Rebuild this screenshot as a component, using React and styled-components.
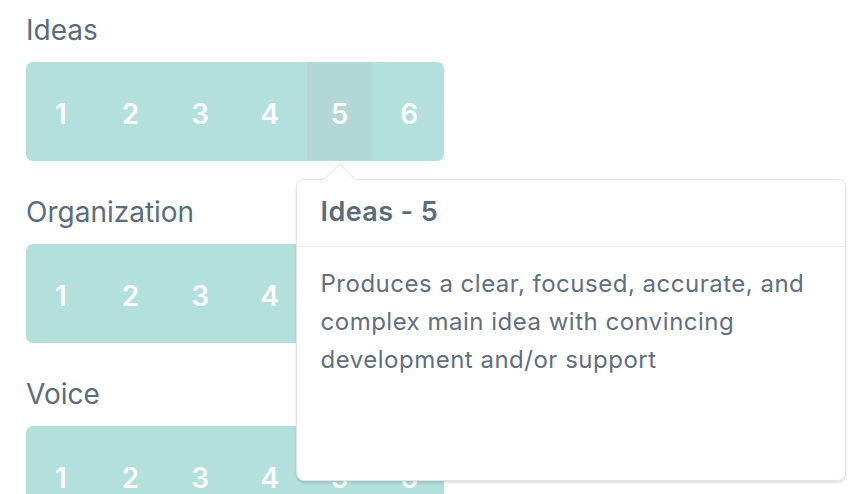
import React from "react";
import styled, { createGlobalStyle } from "styled-components";

const GlobalStyle = createGlobalStyle`
  html, body { margin: 0; padding: 0; background: #ffffff; }
  body { font-family: Inter, "Noto Sans", "Liberation Sans", sans-serif; }
`;

const Page = styled.div`
  display: flex;
  flex-direction: column;
  gap: 34px;
  padding: 13px 26px 0;
  width: 858px;
  height: 494px;
  box-sizing: border-box;
  overflow: hidden;
  position: relative;
`;

const Section = styled.section`
  display: flex;
  flex-direction: column;
  gap: 15px;
`;

const Label = styled.div`
  font-size: 28px;
  line-height: 34px;
  color: #5b6b7c;
  font-weight: 400;
`;

const Bar = styled.div`
  display: flex;
  width: 418px;
  height: 99px;
  box-sizing: border-box;
  padding: 1px 0;
  background: #b3dfdc;
  border-radius: 7px;
`;

const Cell = styled.div`
  flex: 1;
  margin: 0 2px;
  display: flex;
  align-items: center;
  justify-content: center;
  padding-top: 5px;
  position: relative;
  font-size: 28px;
  font-weight: 600;
  color: #fafdfd;
  background: ${(p) => (p.$active ? "#b3d6d6" : "transparent")};
`;

const Popover = styled.div`
  position: absolute;
  top: calc(100% + 19px);
  left: calc(50% - 44px);
  width: 550px;
  height: 302px;
  box-sizing: border-box;
  background: #ffffff;
  border: 1.5px solid #e3e3e3;
  border-radius: 8px;
  box-shadow: 0 2px 3px rgba(0, 0, 0, 0.12);
  z-index: 10;
  cursor: default;
`;

const Arrow = styled.div`
  position: absolute;
  top: -12.5px;
  left: 31px;
  width: 22px;
  height: 22px;
  background: #ffffff;
  border-top: 1.5px solid #e3e3e3;
  border-left: 1.5px solid #e3e3e3;
  transform: rotate(45deg);
`;

const PopHeader = styled.div`
  position: relative;
  padding: 15px 24px 17px;
  font-size: 27px;
  line-height: 34px;
  font-weight: 600;
  letter-spacing: 0.4px;
  color: #5b6b7c;
  border-bottom: 1.5px solid #ececec;
  background: #ffffff;
  border-radius: 8px 8px 0 0;
`;

const PopBody = styled.div`
  padding: 18px 24px;
  font-size: 24px;
  line-height: 38px;
  letter-spacing: 0.5px;
  font-weight: 400;
  color: #5f6f80;
`;

const criteria = ["Ideas", "Organization", "Voice"];

export default function App() {
  return (
    <>
      <GlobalStyle />
      <Page>
        {criteria.map((name, idx) => (
          <Section key={name}>
            <Label>{name}</Label>
            <Bar>
              {[1, 2, 3, 4, 5, 6].map((n) => {
                const active = idx === 0 && n === 5;
                return (
                  <Cell key={n} $active={active}>
                    {n}
                    {active && (
                      <Popover>
                        <Arrow />
                        <PopHeader>Ideas - 5</PopHeader>
                        <PopBody>
                          Produces a clear, focused, accurate, and complex main idea with
                          convincing development and/or support
                        </PopBody>
                      </Popover>
                    )}
                  </Cell>
                );
              })}
            </Bar>
          </Section>
        ))}
      </Page>
    </>
  );
}
